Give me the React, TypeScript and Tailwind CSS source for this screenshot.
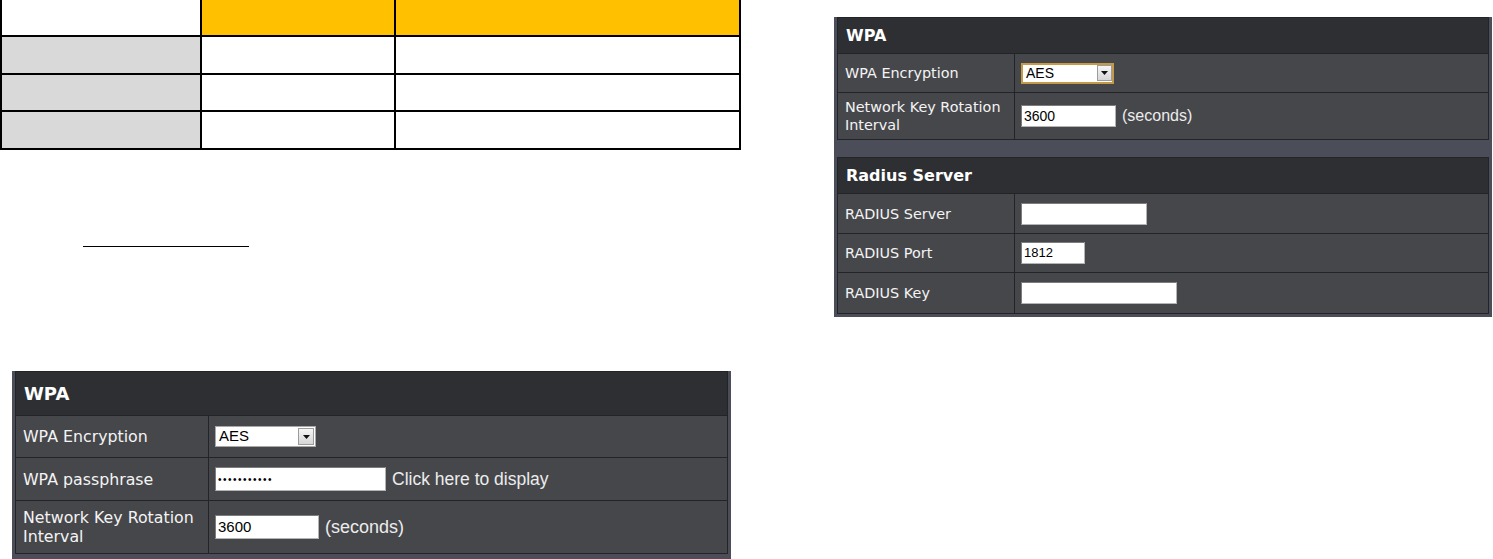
import type { ReactNode } from "react";

const labelFont = "font-['DejaVu_Sans',Verdana,sans-serif] text-[#f4f4f4]";
const fieldFont = "font-['Liberation_Sans',Arial,sans-serif]";
const line = "border-[#232427]";

function DropArrow({ className }: { className: string }) {
  return (
    <span
      className={`flex items-center justify-center border border-[#9c9c9c] bg-linear-to-b from-[#f6f6f6] to-[#d6d6d6] ${className}`}
    >
      <svg viewBox="0 0 7 4" className="h-[4px] w-[7px]">
        <path d="M0 0h7L3.5 4z" fill="#111" />
      </svg>
    </span>
  );
}

function TextBox({ className, children }: { className: string; children?: ReactNode }) {
  return (
    <span
      className={`flex items-center border border-[#b4b4b4] border-t-[#7c7c7c] border-l-[#7c7c7c] bg-white pl-[2px] text-black ${fieldFont} ${className}`}
    >
      {children}
    </span>
  );
}

function Row({
  h,
  labelW,
  labelCls,
  label,
  children,
}: {
  h: string;
  labelW: string;
  labelCls: string;
  label: ReactNode;
  children: ReactNode;
}) {
  return (
    <div className={`flex border-b ${line} bg-[#46474b] ${h}`}>
      <div className={`flex shrink-0 items-center border-r ${line} pl-[7px] ${labelW} ${labelFont} ${labelCls}`}>
        {label}
      </div>
      <div className="flex flex-1 items-center gap-[6px] pl-[6px]">{children}</div>
    </div>
  );
}

function InfoTable() {
  const cell = "border-r-2 border-b-2 border-black";
  return (
    <div className="grid w-[741px] grid-cols-[200px_194px_345px] border-l-2 border-black">
      <div className={`h-[37px] bg-white ${cell}`} />
      <div className={`h-[37px] bg-[#ffc000] ${cell}`} />
      <div className={`h-[37px] bg-[#ffc000] ${cell}`} />
      {[38, 37, 38].map((rh, i) => (
        <div key={i} className="contents">
          <div className={`bg-[#d9d9d9] ${cell}`} style={{ height: rh }} />
          <div className={`bg-white ${cell}`} style={{ height: rh }} />
          <div className={`bg-white ${cell}`} style={{ height: rh }} />
        </div>
      ))}
    </div>
  );
}

function WpaPassphrasePanel() {
  const lw = "w-[193px]";
  const lc = "text-[15.8px] leading-[19px]";
  return (
    <div className="ml-[12px] mt-[124px] w-[719px] bg-[#4b4d58] px-[3px] pb-[20px]">
      <div className={`border-x border-t ${line}`}>
        <div
          className={`flex h-[44px] items-center border-b ${line} bg-[#2e2f33] pl-[8px] font-['DejaVu_Sans',Verdana,sans-serif] text-[18px] font-bold text-white`}
        >
          WPA
        </div>
        <Row h="h-[42px]" labelW={lw} labelCls={lc} label="WPA Encryption">
          <span className="flex h-[21px] w-[101px] items-center border border-[#a8a8a8] bg-white">
            <span className={`flex-1 pl-[3px] text-[15px] text-black ${fieldFont}`}>AES</span>
            <DropArrow className="mr-px h-[17px] w-[16px]" />
          </span>
        </Row>
        <Row h="h-[43px]" labelW={lw} labelCls={lc} label="WPA passphrase">
          <TextBox className="h-[24px] w-[171px]">
            <span className="text-[10px] tracking-[1.5px]">•••••••••••</span>
          </TextBox>
          <span className={`text-[17.5px] text-[#ececec] ${fieldFont}`}>Click here to display</span>
        </Row>
        <Row h="h-[53px]" labelW={lw} labelCls={lc} label="Network Key Rotation Interval">
          <TextBox className="h-[24px] w-[104px] text-[15px]">3600</TextBox>
          <span className={`text-[18px] text-[#ececec] ${fieldFont}`}>(seconds)</span>
        </Row>
      </div>
    </div>
  );
}

function RadiusPanel() {
  const lw = "w-[177px]";
  const lc = "text-[14.4px] leading-[18px]";
  const head = `flex h-[36px] items-center border-b ${line} bg-[#2e2f33] pl-[8px] font-['DejaVu_Sans',Verdana,sans-serif] text-[16px] font-bold text-white`;
  return (
    <div className="ml-[93px] mt-[17px] w-[658px] bg-[#4b4d58] px-[3px] pb-[3px]">
      <div className={`border-x border-t ${line}`}>
        <div className={head}>WPA</div>
        <Row h="h-[39px]" labelW={lw} labelCls={lc} label="WPA Encryption">
          <span className="flex h-[21px] w-[93px] items-center border-2 border-[#c49a48] bg-white">
            <span className={`flex-1 pl-[3px] text-[14px] text-black ${fieldFont}`}>AES</span>
            <DropArrow className="h-[16px] w-[15px]" />
          </span>
        </Row>
        <Row h="h-[47px]" labelW={lw} labelCls={lc} label="Network Key Rotation Interval">
          <TextBox className="h-[22px] w-[95px] text-[14px]">3600</TextBox>
          <span className={`text-[16px] text-[#ececec] ${fieldFont}`}>(seconds)</span>
        </Row>
      </div>
      <div className={`mt-[17px] border-x border-t ${line}`}>
        <div className={head}>Radius Server</div>
        <Row h="h-[40px]" labelW={lw} labelCls={lc} label="RADIUS Server">
          <TextBox className="h-[22px] w-[126px]" />
        </Row>
        <Row h="h-[39px]" labelW={lw} labelCls={lc} label="RADIUS Port">
          <TextBox className="h-[22px] w-[64px] text-[13px]">1812</TextBox>
        </Row>
        <Row h="h-[41px]" labelW={lw} labelCls={lc} label="RADIUS Key">
          <TextBox className="h-[22px] w-[156px]" />
        </Row>
      </div>
    </div>
  );
}

export default function App() {
  return (
    <div className="flex h-[559px] w-[1493px] items-start overflow-hidden bg-white">
      <div className="flex w-[741px] shrink-0 flex-col">
        <InfoTable />
        <div className="ml-[83px] mt-[96px] h-px w-[166px] bg-black" />
        <WpaPassphrasePanel />
      </div>
      <RadiusPanel />
    </div>
  );
}
